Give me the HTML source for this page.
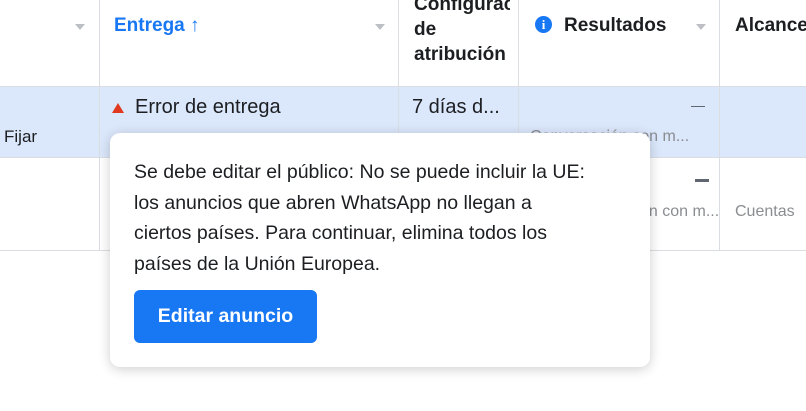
<!DOCTYPE html>
<html><head><meta charset="utf-8"><style>
body{margin:0;width:806px;height:411px;background:#fff;font-family:"Liberation Sans",sans-serif;position:relative;overflow:hidden;color:#1c1e21}
.a{position:absolute;white-space:nowrap}
.vl{position:absolute;width:1px;background:#dadde1}
.hl{position:absolute;height:1px;left:0;width:806px;background:#dadde1}
.tri{position:absolute;width:0;height:0;border-left:5px solid transparent;border-right:5px solid transparent;border-top:6px solid #bcc0c4}
.h{font-weight:bold;font-size:19px}
</style></head><body>
<div class="a" style="left:0;top:87px;width:806px;height:70px;background:#dbe7fb"></div>
<div class="hl" style="top:86px"></div>
<div class="hl" style="top:157px"></div>
<div class="hl" style="top:250px"></div>
<div class="vl" style="left:99px;top:0;height:251px"></div>
<div class="vl" style="left:398px;top:0;height:251px"></div>
<div class="vl" style="left:518px;top:0;height:251px"></div>
<div class="vl" style="left:719px;top:0;height:251px"></div>
<div class="tri" style="left:75px;top:24px"></div>
<div class="a h" style="left:114px;top:15px;color:#1877f2">Entrega ↑</div>
<div class="tri" style="left:375px;top:24px"></div>
<div class="a h" style="left:414px;top:-8px;line-height:25px;width:96px;overflow:hidden">Configuración<br>de<br>atribución</div>
<div class="a" style="left:535px;top:16px;width:17px;height:17px;border-radius:50%;background:#1877f2;color:#fff;font-size:13px;font-weight:bold;text-align:center;line-height:17px;font-family:'Liberation Serif',serif">i</div>
<div class="a h" style="left:564px;top:15px">Resultados</div>
<div class="tri" style="left:696px;top:24px"></div>
<div class="a h" style="left:735px;top:15px">Alcance</div>
<div class="a" style="left:112px;top:103px;width:0;height:0;border-left:6px solid transparent;border-right:6px solid transparent;border-bottom:10px solid #e0391f"></div>
<div class="a" style="left:135px;top:96px;font-size:20px">Error de entrega</div>
<div class="a" style="left:412px;top:96px;font-size:20px">7 días d...</div>
<div class="a" style="left:691px;top:106px;width:14px;height:1px;background:#606770"></div>
<div class="a" style="left:4px;top:127px;font-size:17px">Fijar</div>
<div class="a" style="left:530px;top:128px;font-size:16px;color:#8a8d91">Conversación con m...</div>
<div class="a" style="left:695px;top:179px;width:14px;height:3px;background:#606770"></div>
<div class="a" style="left:560px;top:203px;font-size:16px;color:#8a8d91">Conversación con m...</div>
<div class="a" style="left:735px;top:203px;font-size:16px;color:#8a8d91">Cuentas</div>
<div class="a" style="left:110px;top:133px;width:540px;height:234px;background:#fff;border-radius:10px;box-shadow:0 2px 12px rgba(0,0,0,.2)">
<div class="a" style="left:24px;top:24px;font-size:19.5px;line-height:30.5px;color:#1c1e21">Se debe editar el público: No se puede incluir la UE:<br>los anuncios que abren WhatsApp no llegan a<br>ciertos países. Para continuar, elimina todos los<br>países de la Unión Europea.</div>
<div class="a" style="left:24px;top:157px;width:183px;height:53px;background:#1877f2;border-radius:6px;color:#fff;font-weight:bold;font-size:19.5px;text-align:center;line-height:53px">Editar anuncio</div>
</div>
</body></html>
